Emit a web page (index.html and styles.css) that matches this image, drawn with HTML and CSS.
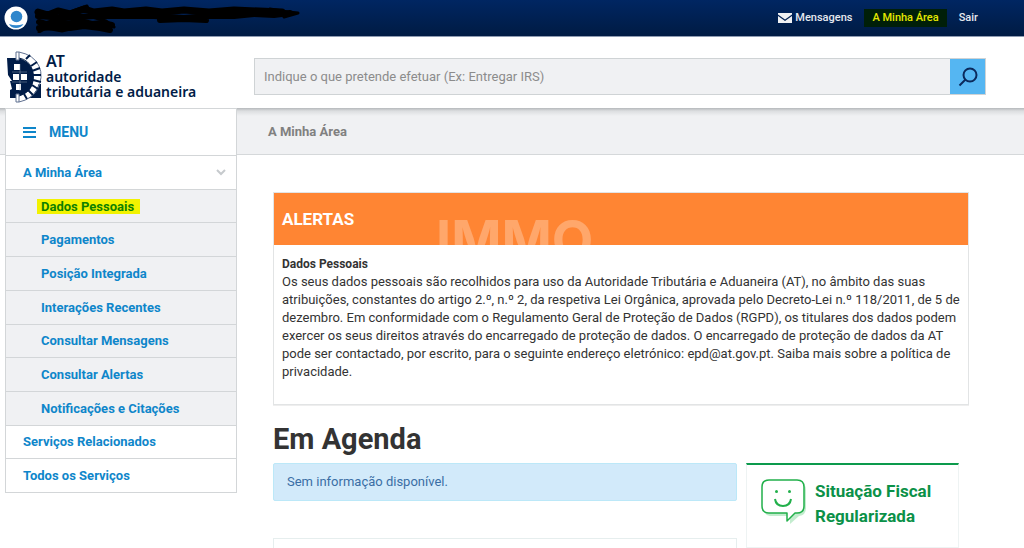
FILE: index.html
```html
<!DOCTYPE html>
<html lang="pt">
<head>
    <meta charset="UTF-8">
    <meta name="viewport" content="width=device-width, initial-scale=1">
    <title>A Minha Área</title>
    <link rel="stylesheet" href="styles.css">
</head>
<body>
    <header>
        <div class="topbar">
            <div class="user">
                <svg class="avatar" width="24" height="24" viewBox="0 0 24 24" aria-hidden="true">
                    <circle cx="12" cy="12" r="11.5" fill="#fff"/>
                    <circle cx="12.500" cy="10.500" r="5.800" fill="#2f86cc"/>
                    <path d="M5 18Q12 20.500 19.500 18Q17 22 12 22T5 18Z" fill="#2f86cc"/>
                </svg>
                <svg class="scribble" width="268" height="30" viewBox="0 0 268 30" fill="none" stroke="#000" stroke-linecap="round" stroke-linejoin="round" aria-hidden="true">
                    <path stroke-width="7" d="M4 9L14 12L24 8L36 11L50 6L60 9L78 7L90 9L112 7L128 9L150 7L175 9L200 7L225 8L248 9"/>
                    <path stroke-width="6" d="M4 13L30 15L60 13L90 13L120 13L150 15L175 13L200 13L220 11L240 12L256 10M126 17L150 16L172 17"/>
                    <path stroke-width="6" d="M5 19L12 21L22 18L34 21L46 18L58 21L68 20L78 22M5 25L24 24L36 25L50 23L66 25L76 27"/>
                    <path stroke-width="3" d="M5 29L12 25L28 28L44 24M36 9L53 3L58 14L72 18L80 24M236 6L254 9L264 10L250 14"/>
                </svg>
            </div>
            <nav class="toplinks">
                <a href="#">
                    <svg width="14" height="10" viewBox="0 0 14 10" aria-hidden="true">
                        <path d="M0 0H14V1.500L7 6.500L0 1.500Z" fill="#f0f1f3"/>
                        <path d="M0 3L7 8L14 3V10H0Z" fill="#f0f1f3"/>
                    </svg>
                    Mensagens
                </a>
                <a href="#" class="marked">A Minha Área</a>
                <a href="#">Sair</a>
            </nav>
        </div>
        <div class="brandbar">
            <a href="#" class="brand">
                <svg width="35" height="52" viewBox="0 0 35 52" aria-hidden="true">
                    <path d="M0 7H22L27 17V36L22 47H3V39L5 38L3 30H5L1 24Z" fill="#001c47"/>
                    <path d="M34 33V47H18Q29 44 31 33Z" fill="#001c47"/>
                    <path d="M12 4Q24 7 28 17T27 37Q23 45 12 48" fill="none" stroke="#fff" stroke-width="6"/>
                    <path d="M12 7Q22 9 25 18T24 36Q21 42 12 45" fill="none" stroke="#001c47"/>
                    <path d="M12 1Q27 4 32 15T30 39Q25 48 12 51" fill="none" stroke="#5f7090"/>
                    <path d="M19 8L23 4M24 15L30 11M25 20L33 17M26 24L34 24M26 29L34 31M25 34L31 38M21 39L26 44M17 43L20 48" stroke="#001c47" stroke-width="2"/>
                    <path d="M9 1H12V9H9ZM9 43H12V51H9Z" fill="#fff" stroke="#5f7090"/>
                    <path d="M7 13H13V19H7ZM6 23H12V29H6ZM14 23H20V29H14ZM9 33H14V39H9Z" fill="#fff"/>
                    <path d="M5 21H20M5 31H20M13 13V40" stroke="#8b98af" stroke-width="0.500"/>
                </svg>
                <span class="brand-name"><span class="brand-short">AT</span><span>autoridade</span><span>tributária e aduaneira</span></span>
            </a>
            <form class="search">
                <input type="text" placeholder="Indique o que pretende efetuar (Ex: Entregar IRS)" aria-label="Pesquisar">
                <button type="button" aria-label="Pesquisar">
                    <svg width="20" height="20" viewBox="0 0 20 20" fill="none" stroke="#0b2a5c" stroke-width="2" aria-hidden="true">
                        <circle cx="12" cy="8" r="6.500"/>
                        <path d="M7.500 12.500L1.500 18.500"/>
                    </svg>
                </button>
            </form>
        </div>
    </header>

    <div class="page">
        <nav class="sidebar">
            <div class="menu-title">
                <svg width="13" height="11" viewBox="0 0 13 11" fill="#0e86ca" aria-hidden="true">
                    <path d="M0 0H13V2H0ZM0 4H13V6H0ZM0 9H13V11H0Z"/>
                </svg>
                MENU
            </div>
            <ul class="menu">
                <li>
                    <a href="#">A Minha Área</a>
                    <svg width="10" height="7" viewBox="0 0 10 7" fill="none" stroke="#c6cacd" stroke-width="2" aria-hidden="true"><path d="M1 1L5 5L9 1"/></svg>
                </li>
                <li class="sub"><a href="#" class="highlight">Dados Pessoais</a></li>
                <li class="sub"><a href="#">Pagamentos</a></li>
                <li class="sub"><a href="#">Posição Integrada</a></li>
                <li class="sub"><a href="#">Interações Recentes</a></li>
                <li class="sub"><a href="#">Consultar Mensagens</a></li>
                <li class="sub"><a href="#">Consultar Alertas</a></li>
                <li class="sub"><a href="#">Notificações e Citações</a></li>
                <li><a href="#">Serviços Relacionados</a></li>
                <li><a href="#">Todos os Serviços</a></li>
            </ul>
        </nav>

        <main>
            <div class="breadcrumb">A Minha Área</div>
            <div class="content">
                <section class="alerts">
                    <div class="alerts-head">
                        <h2>ALERTAS</h2>
                        <span class="watermark">IMMO</span>
                    </div>
                    <div class="alerts-body">
                        <h3>Dados Pessoais</h3>
                        <p>Os seus dados pessoais são recolhidos para uso da Autoridade Tributária e Aduaneira (AT), no âmbito das suas atribuições, constantes do artigo 2.º, n.º 2, da respetiva Lei Orgânica, aprovada pelo Decreto-Lei n.º 118/2011, de 5 de dezembro. Em conformidade com o Regulamento Geral de Proteção de Dados (RGPD), os titulares dos dados podem exercer os seus direitos através do encarregado de proteção de dados. O encarregado de proteção de dados da AT pode ser contactado, por escrito, para o seguinte endereço eletrónico: epd@at.gov.pt. Saiba mais sobre a política de privacidade.</p>
                    </div>
                </section>

                <h1>Em Agenda</h1>
                <div class="columns">
                    <div class="agenda">
                        <p class="info">Sem informação disponível.</p>
                        <div class="panel"></div>
                    </div>
                    <aside class="status">
                        <svg width="46" height="46" viewBox="0 0 46 46" fill="none" stroke-linejoin="round" aria-hidden="true">
                            <path d="M9 4H38Q45 4 45 11V29Q45 36 38 37L29 45V37H9Q3 36 3 30V11Q3 4 9 4Z" fill="#c3ecce"/>
                            <path d="M8 1H36Q43 1 43 8V27Q43 34 36 34H34L26 42V34H8Q1 34 1 27V8Q1 1 8 1Z" fill="#fff" stroke="#22b04b" stroke-width="1.500"/>
                            <path d="M14 20Q15 27 22 27T30 20" stroke="#22b04b" stroke-width="2"/>
                            <circle cx="15.500" cy="12.500" r="1.500" fill="#22b04b"/>
                            <circle cx="28.500" cy="12.500" r="1.500" fill="#22b04b"/>
                        </svg>
                        <strong>Situação Fiscal Regularizada</strong>
                    </aside>
                </div>
            </div>
        </main>
    </div>
</body>
</html>
```

FILE: styles.css
```css
* {
    box-sizing: border-box;
}
body {
    margin: 0;
    font-family: Roboto, "Liberation Sans", sans-serif;
    font-size: 13px;
    line-height: 18px;
    color: #333;
    background: #fff;
}
a {
    text-decoration: none;
}
h1, h2, h3, p, ul {
    margin: 0;
    padding: 0;
}

/* header */
.topbar {
    display: flex;
    justify-content: space-between;
    align-items: center;
    height: 37px;
    padding: 0 46px 0 4px;
    background: linear-gradient(#002662, #001b43);
    border-bottom: 1px solid #8e9bb2;
}
.user {
    display: flex;
    align-items: center;
    gap: 6px;
}
.toplinks {
    display: flex;
    align-items: center;
    gap: 12px;
}
.toplinks a {
    display: flex;
    align-items: center;
    gap: 3px;
    font-size: 11px;
    font-weight: 500;
    color: #e6e9ef;
}
.toplinks .marked {
    padding: 0 8px;
    background: #001f08;
    color: #e6e900;
}
.brandbar {
    display: flex;
    align-items: center;
    height: 71px;
    padding: 8px 38px 0 7px;
}
.brand {
    display: flex;
    align-items: center;
    gap: 4px;
    width: 247px;
    color: #001c47;
}
.brand-name {
    font-family: "Noto Sans", sans-serif;
    font-size: 14px;
    font-weight: 600;
    line-height: 15px;
}
.brand-name span {
    display: block;
}
.brand-name .brand-short {
    font-size: 16px;
}
.search {
    display: flex;
    flex: 1;
    height: 37px;
    border: 1px solid #cfd3d5;
}
.search input {
    flex: 1;
    min-width: 0;
    padding: 0 9px;
    border: 0;
    background: #f0f1f3;
    font-family: inherit;
    font-size: 13px;
}
.search input::placeholder {
    color: #8c8c8c;
}
.search button {
    display: flex;
    align-items: center;
    justify-content: center;
    width: 35px;
    padding: 0;
    border: 0;
    background: #55b6f2;
    cursor: pointer;
}

/* sidebar */
.page {
    display: flex;
    align-items: flex-start;
    background: linear-gradient(#b5b8bb, #dcdee0 3px, #f0f1f3 8px, #f0f1f3 46px, #d5d8da 46px, #d5d8da 47px, #fff 47px);
}
.sidebar {
    width: 232px;
    margin-left: 5px;
    border: 1px solid #d3d6d8;
    background: #fff;
}
.menu-title {
    display: flex;
    align-items: center;
    gap: 13px;
    height: 46px;
    padding: 0 17px;
    font-size: 14px;
    font-weight: 700;
    color: #0e86ca;
}
.menu {
    display: flex;
    flex-direction: column;
    min-height: 337px;
    list-style: none;
}
.menu li {
    display: flex;
    flex: 1;
    align-items: center;
    justify-content: space-between;
    padding: 0 10px 0 17px;
    border-top: 1px solid #d3d6d8;
}
.menu .sub {
    padding-left: 35px;
    background: #f0f1f3;
}
.menu a {
    font-size: 13px;
    font-weight: 700;
    line-height: 15px;
    color: #0e86ca;
}
.menu .highlight {
    margin-left: -4px;
    padding: 0 6px 0 4px;
    background: #f2f200;
    color: #0d8000;
}

/* content */
main {
    flex: 1;
    min-width: 0;
}
.breadcrumb {
    height: 47px;
    padding-left: 31px;
    font-size: 13px;
    font-weight: 700;
    line-height: 47px;
    color: #808080;
}
.content {
    padding: 37px 55px 0 36px;
}
.alerts {
    border: 1px solid #e2e4e5;
    box-shadow: 0 1px 0 #eee;
}
.alerts-head {
    position: relative;
    height: 52px;
    padding: 0 8px;
    overflow: hidden;
    background: #ff8533;
    color: #fff;
}
.alerts-head h2 {
    font-size: 17px;
    font-weight: 700;
    line-height: 52px;
}
.watermark {
    position: absolute;
    top: 20px;
    left: 162px;
    font-family: Inter, sans-serif;
    font-size: 54px;
    font-weight: 700;
    line-height: 54px;
    color: rgba(255, 255, 255, 0.28);
}
.alerts-body {
    padding: 10px 4px 23px 8px;
}
.alerts-body h3 {
    font-size: 12px;
    font-weight: 700;
    line-height: 18px;
}
h1 {
    padding: 16px 0 6px;
    font-size: 29px;
    font-weight: 700;
    line-height: 36px;
}
.columns {
    display: grid;
    grid-template-columns: 1fr 213px;
    gap: 9px;
    padding-right: 10px;
}
.info {
    padding: 9px 13px;
    border: 1px solid #bce8f8;
    border-radius: 2px;
    background: #d2eafa;
    color: #3a6ea5;
}
.panel {
    height: 10px;
    margin-top: 37px;
    border: 1px solid #e6eeee;
    border-bottom: 0;
}
.status {
    display: flex;
    align-items: flex-start;
    gap: 8px;
    padding: 14px 14px 17px;
    border: 1px solid #eef3f3;
    border-top: 2px solid #0c9a4c;
}
.status svg {
    flex: none;
}
.status strong {
    font-size: 17px;
    font-weight: 700;
    line-height: 25px;
    color: #0b9148;
}
```
